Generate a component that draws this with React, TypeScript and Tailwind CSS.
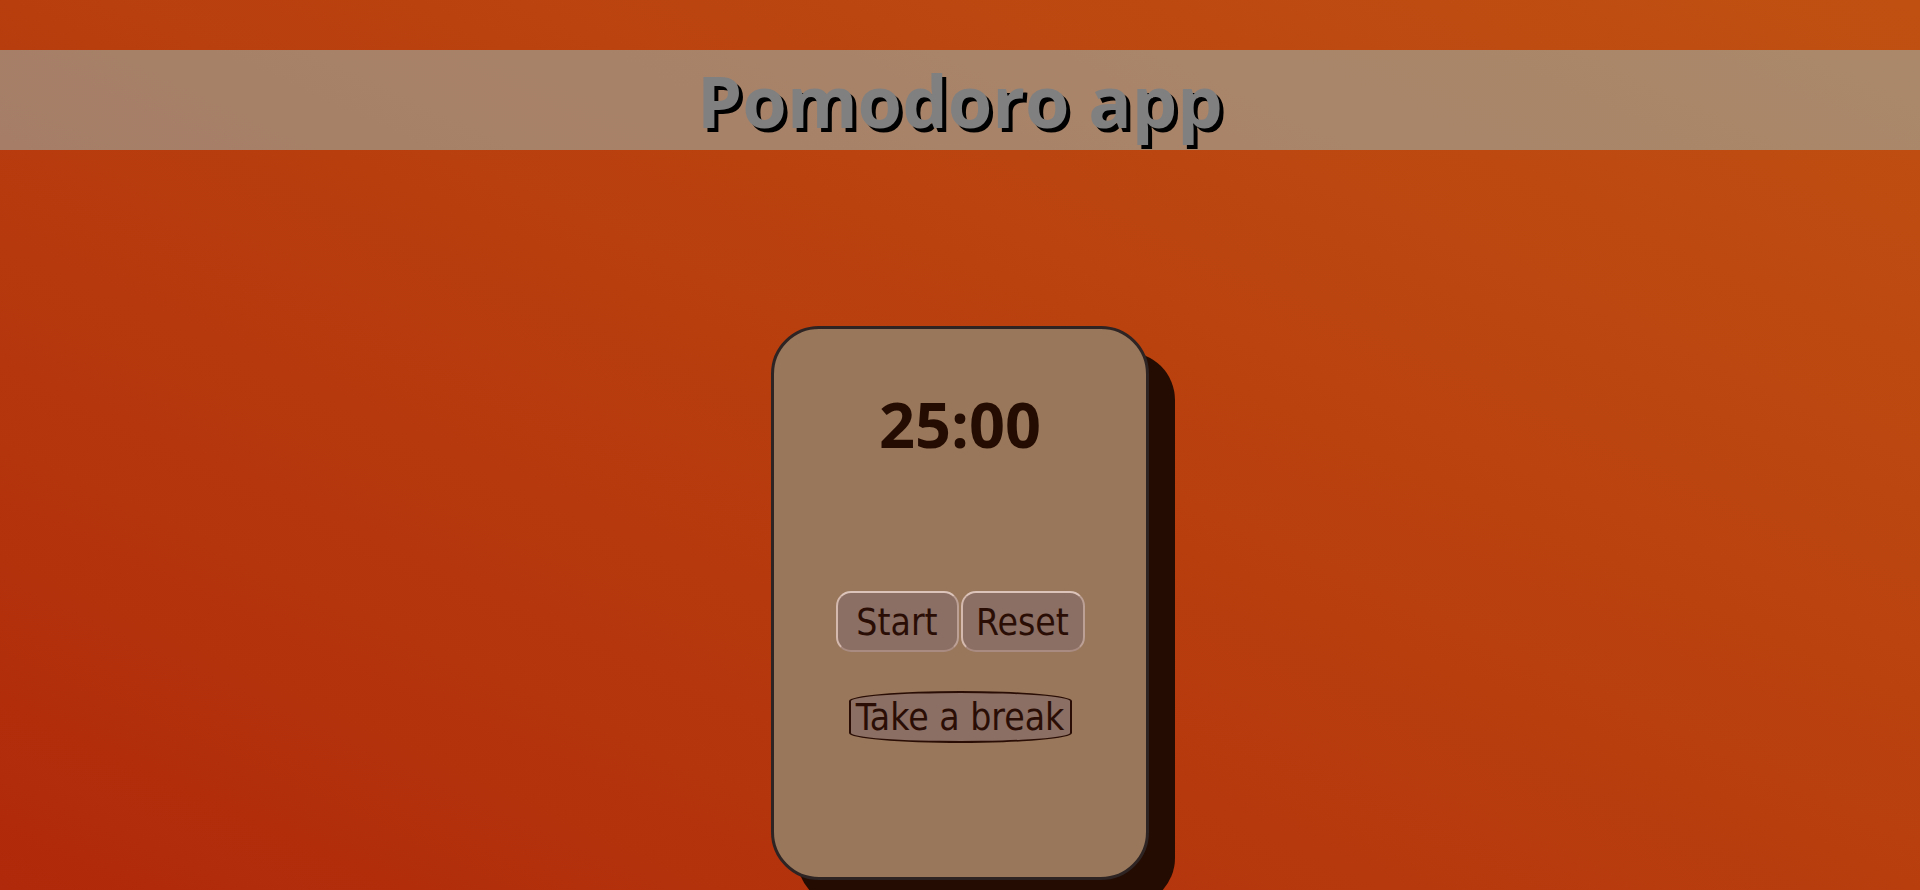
import React, { useEffect, useState } from "react";

const WORK_SECONDS = 25 * 60;
const BREAK_SECONDS = 5 * 60;

const formatTime = (total: number) => {
    const m = Math.floor(total / 60);
    const s = total % 60;
    return `${String(m).padStart(2, "0")}:${String(s).padStart(2, "0")}`;
};

const App: React.FC = () => {
    const [seconds, setSeconds] = useState(WORK_SECONDS);
    const [running, setRunning] = useState(false);

    // tick once a second while running
    useEffect(() => {
        if (!running) return;
        const id = setInterval(() => {
            setSeconds((s) => (s > 0 ? s - 1 : 0));
        }, 1000);
        return () => clearInterval(id);
    }, [running]);

    const handleReset = () => {
        setRunning(false);
        setSeconds(WORK_SECONDS);
    };

    const handleBreak = () => {
        setRunning(false);
        setSeconds(BREAK_SECONDS);
    };

    return (
        <div className="min-h-screen bg-linear-to-tr from-[#b0290a] to-[#c05012] pt-[50px]">
            {/* Title band */}
            <header className="flex h-[100px] items-center justify-center bg-[rgba(149,194,194,0.5)]">
                <h1 className="font-['Open_Sans',sans-serif] text-[72px] leading-[98px] font-bold text-[#808080] [text-shadow:4px_4px_0_#000]">
                    Pomodoro app
                </h1>
            </header>

            <main className="flex justify-center pt-[176px]">
                {/* Timer card */}
                <div className="flex h-[554px] w-[378px] flex-col items-center rounded-[48px] border-[3px] border-[#2e2424] bg-[#98775a] pt-[51px] shadow-[26px_26px_0_#240c02]">
                    <div className="font-['Open_Sans',sans-serif] text-[63px] leading-[87px] font-bold text-[#250c02]">
                        {formatTime(seconds)}
                    </div>

                    {/* Start / Reset */}
                    <div className="mt-[124px] flex gap-[2px] font-['DejaVu_Sans_Condensed','DejaVu_Sans',sans-serif] font-stretch-condensed text-[37px] text-[#2a0e05]">
                        <button
                            onClick={() => setRunning(!running)}
                            className="flex h-[61px] w-[123px] items-center justify-center rounded-[15px] border-2 border-t-[#dcc4ba] border-r-[#bca096] border-b-[#a98b81] border-l-[#d4b9ae] bg-[#8b6e64] pt-[3px]"
                        >
                            {running ? "Pause" : "Start"}
                        </button>
                        <button
                            onClick={handleReset}
                            className="flex h-[61px] w-[124px] items-center justify-center rounded-[15px] border-2 border-t-[#dcc4ba] border-r-[#bca096] border-b-[#a98b81] border-l-[#d4b9ae] bg-[#8b6e64] pt-[3px]"
                        >
                            Reset
                        </button>
                    </div>

                    {/* Break */}
                    <button
                        onClick={handleBreak}
                        className="mt-[39px] flex h-[52px] w-[223px] items-center justify-center rounded-[50%/10px] border-2 border-[#2a0e05] bg-[#8b6e64] pt-[2px] font-['DejaVu_Sans_Condensed','DejaVu_Sans',sans-serif] font-stretch-condensed text-[37px] text-[#2a0e05]"
                    >
                        Take a break
                    </button>
                </div>
            </main>
        </div>
    );
};

export default App;
